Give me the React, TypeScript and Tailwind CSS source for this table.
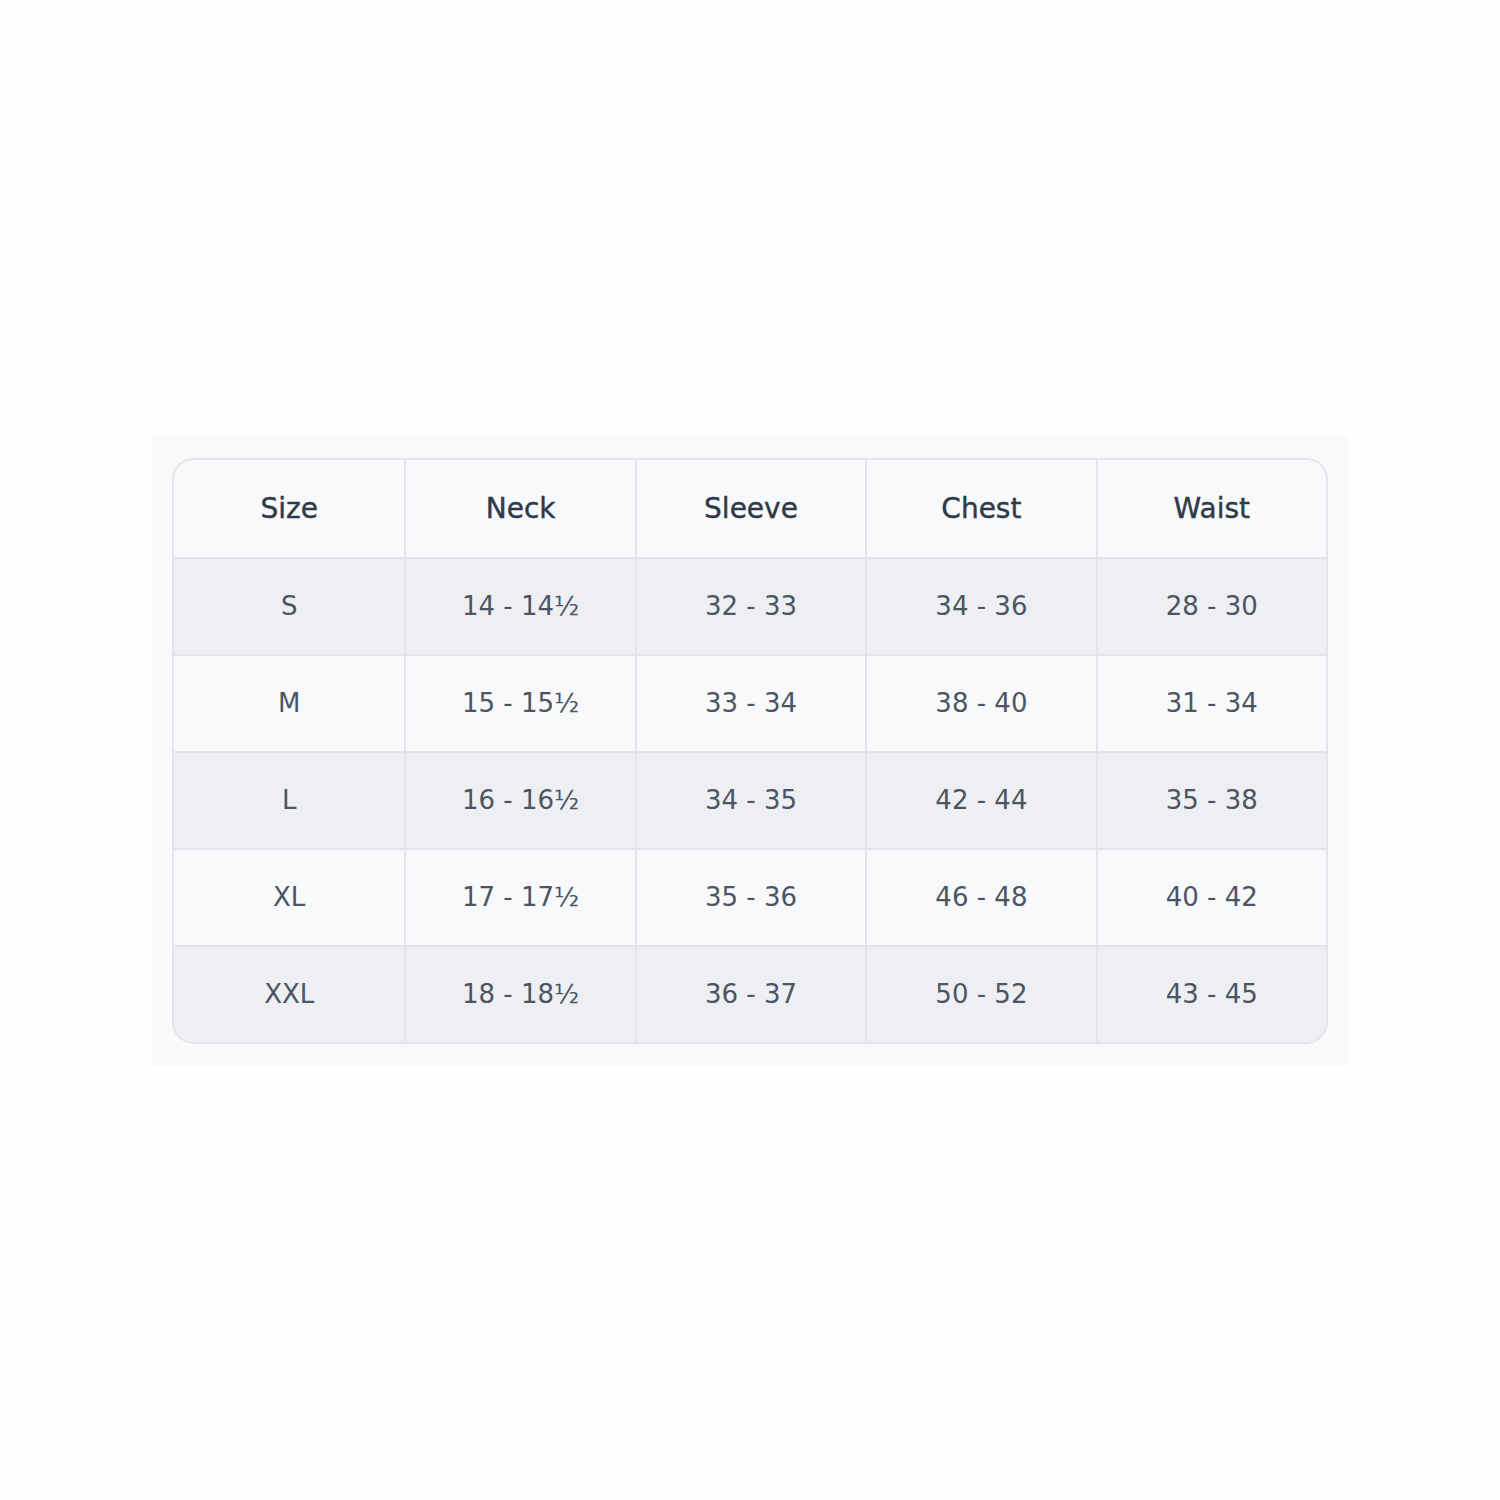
const headers = ['Size', 'Neck', 'Sleeve', 'Chest', 'Waist'];

const rows = [
  ['S', '14 - 14½', '32 - 33', '34 - 36', '28 - 30'],
  ['M', '15 - 15½', '33 - 34', '38 - 40', '31 - 34'],
  ['L', '16 - 16½', '34 - 35', '42 - 44', '35 - 38'],
  ['XL', '17 - 17½', '35 - 36', '46 - 48', '40 - 42'],
  ['XXL', '18 - 18½', '36 - 37', '50 - 52', '43 - 45'],
];

export default function App() {
  return (
    <div className="w-[1500px] h-[1500px] bg-[#fefefe] flex items-center justify-center font-['DejaVu_Sans',sans-serif]">
      <div className="w-[1196px] bg-[#f8f9fb] px-5 pt-[22px] pb-[22px] mt-[2px]">
        <div className="rounded-[22px] border-2 border-[#e2e4e8] overflow-hidden">
          <div className="grid grid-cols-5 h-[97px] bg-[#f8f9fb]">
            {headers.map((h, i) => (
              <div
                key={h}
                className={`flex items-center justify-center text-[28px] text-[#2f3947] [-webkit-text-stroke:0.4px_#2f3947] ${i > 0 ? 'border-l-2 border-[#e2e4e8]' : ''}`}
              >
                {h}
              </div>
            ))}
          </div>
          {rows.map((r, ri) => (
            <div
              key={r[0]}
              className={`grid grid-cols-5 h-[97px] border-t-2 border-[#e2e4e8] ${ri % 2 === 0 ? 'bg-[#eeeff2]' : 'bg-[#f8f9fb]'}`}
            >
              {r.map((c, i) => (
                <div
                  key={i}
                  className={`flex items-center justify-center text-[26px] text-[#4b5563] ${i > 0 ? 'border-l-2 border-[#e2e4e8]' : ''}`}
                >
                  {c}
                </div>
              ))}
            </div>
          ))}
        </div>
      </div>
    </div>
  );
}
